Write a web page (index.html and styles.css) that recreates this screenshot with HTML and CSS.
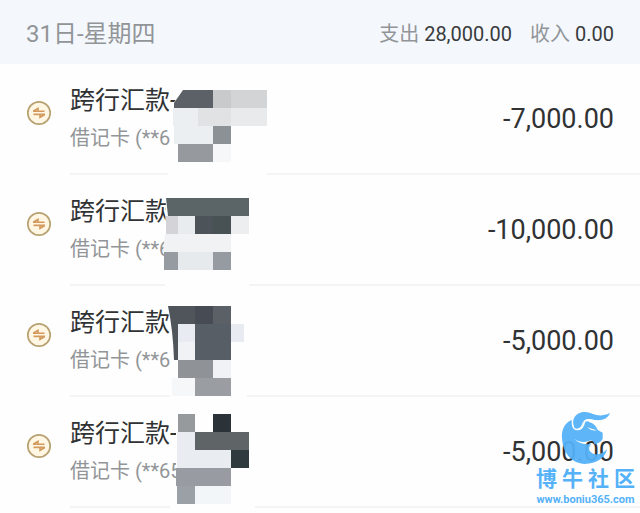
FILE: index.html
```html
<!DOCTYPE html>
<html lang="zh-CN">
<head>
<meta charset="utf-8">
<meta name="viewport" content="width=device-width, initial-scale=1">
<title>收支明细</title>
<link rel="stylesheet" href="styles.css">
</head>
<body>
<svg class="defs" aria-hidden="true">
  <symbol id="transfer" viewBox="0 0 26 26">
    <circle cx="13" cy="13" r="11.2" fill="#fff7e4" stroke="#b8a272" stroke-width="1.7"/>
    <path d="M7 11.3H18.5M7.5 11L12 8.4V11M19 14.4H7.5M18.5 14.7L14 17.3V14.7" fill="none" stroke="#d39a5e" stroke-width="1.6"/>
  </symbol>
</svg>
<header class="day">
  <h1 class="date">31日-星期四</h1>
  <p class="totals">
    <span>支出 <b>28,000.00</b></span>
    <span>收入 <b>0.00</b></span>
  </p>
</header>
<main>
  <ul class="list">
    <li class="row">
      <svg class="icon" aria-hidden="true"><use href="#transfer"/></svg>
      <div class="entry">
        <div class="info">
          <h2 class="title">跨行汇款-</h2>
          <p class="card">借记卡 (**6</p>
        </div>
        <span class="amount">-7,000.00</span>
      </div>
      <svg class="mosaic" viewBox="160 64 110 113" aria-hidden="true">
        <path fill="#fefefe" d="M183 88H267V177H168V150L173 126V104Z"/>
        <path fill="#5b6166" d="M183 90H213V108H174V103Z"/>
        <path fill="#c8cacc" d="M213 90H231V108H213Z"/>
        <path fill="#d2d4d5" d="M231 90H267V108H231Z"/>
        <path fill="#eceff1" d="M173 108H200V126H173ZM174 126H213V144H174Z"/>
        <path fill="#e0e2e4" d="M198 108H231V126H198Z"/>
        <path fill="#e8eaeb" d="M231 108H267V126H231Z"/>
        <path fill="#8c9195" d="M213 126H231V144H213Z"/>
        <path fill="#969a9e" d="M178 144H213V162H178Z"/>
        <path fill="#f5f7f9" d="M213 144H231V162H213Z"/>
      </svg>
    </li>
    <li class="row">
      <svg class="icon" aria-hidden="true"><use href="#transfer"/></svg>
      <div class="entry">
        <div class="info">
          <h2 class="title">跨行汇款</h2>
          <p class="card">借记卡 (**6</p>
        </div>
        <span class="amount">-10,000.00</span>
      </div>
      <svg class="mosaic" viewBox="160 175 110 113" aria-hidden="true">
        <path fill="#fefefe" d="M166 198H249V288H165V234Z"/>
        <path fill="#5b6467" d="M166 198H249V216H168Z"/>
        <path fill="#d4d4d8" d="M166 216H178V234H166Z"/>
        <path fill="#e8ecef" d="M178 216H195V234H178Z"/>
        <path fill="#4d5459" d="M195 216H213V234H195Z"/>
        <path fill="#485154" d="M213 216H231V234H213Z"/>
        <path fill="#edeeef" d="M231 216H249V234H231Z"/>
        <path fill="#f0f2f4" d="M165 234H231V252H163Z"/>
        <path fill="#969aa1" d="M164 252H178V270H164ZM213 252H231V270H213Z"/>
        <path fill="#e6eaed" d="M178 252H213V270H178Z"/>
      </svg>
    </li>
    <li class="row">
      <svg class="icon" aria-hidden="true"><use href="#transfer"/></svg>
      <div class="entry">
        <div class="info">
          <h2 class="title">跨行汇款</h2>
          <p class="card">借记卡 (**6</p>
        </div>
        <span class="amount">-5,000.00</span>
      </div>
      <svg class="mosaic" viewBox="160 286 110 113" aria-hidden="true">
        <path fill="#fefefe" d="M170 306H247V399H170V378H174V360Z"/>
        <path fill="#50555c" d="M168 306H195V324H178V360H174Q173 330 168 306Z"/>
        <path fill="#464b54" d="M195 306H213V324H195Z"/>
        <path fill="#5b6067" d="M213 306H231V324H213Z"/>
        <path fill="#e8ecf2" d="M178 324H195V342H178ZM231 324H244V342H231Z"/>
        <path fill="#f0f2f6" d="M178 342H195V360H178ZM213 360H231V378H213Z"/>
        <path fill="#585e66" d="M195 324H231V360H195Z"/>
        <path fill="#8f9398" d="M178 360H213V378H178Z"/>
        <path fill="#f6f7f9" d="M172 378H195V396H172Z"/>
        <path fill="#9a9ea3" d="M195 378H231V396H195Z"/>
      </svg>
    </li>
    <li class="row">
      <svg class="icon" aria-hidden="true"><use href="#transfer"/></svg>
      <div class="entry">
        <div class="info">
          <h2 class="title">跨行汇款-</h2>
          <p class="card">借记卡 (**65</p>
        </div>
        <span class="amount">-5,000.00</span>
      </div>
      <svg class="mosaic" viewBox="160 397 110 113" aria-hidden="true">
        <path fill="#fefefe" d="M178 414H255V510H170V504H176V432Z"/>
        <path fill="#969a9d" d="M178 414H195V432H178Z"/>
        <path fill="#2b3338" d="M213 414H231V432H213Z"/>
        <path fill="#e9edf1" d="M177 432H195V468H177ZM195 450H231V468H195Z"/>
        <path fill="#5f6467" d="M195 432H249V450H195Z"/>
        <path fill="#2f3a3e" d="M231 450H249V468H231Z"/>
        <path fill="#989ba1" d="M176 468H231V486H176Z"/>
        <path fill="#9b9fa6" d="M177 486H195V504H177Z"/>
        <path fill="#f3f6f8" d="M195 486H231V504H195Z"/>
      </svg>
      <div class="watermark">
        <svg class="bull" viewBox="240 60 150 165" aria-hidden="true">
          <path d="M272 90C250 98 241 122 243 145C246 193 275 221 311 222C347 221 372 205 378 178C366 191 346 198 334 190C322 183 322 172 330 163C312 164 293 160 280 147C293 156 310 158 322 153C333 148 341 156 340 164C351 160 363 156 365 145V128L350 120C346 109 337 100 326 97C319 92 313 93 311 101C307 118 291 126 279 118Q271 110 272 90Z"/>
          <path d="M280 115C268 88 286 65 313 66C338 68 350 86 387 69C380 88 358 94 337 89C321 85 309 86 307 99C304 113 288 121 280 115Z"/>
          <path class="cut" d="M275 92C274 109 280 120 291 117C306 112 302 99 311 92C321 86 334 92 350 92"/>
          <path class="eye" d="M318 112L347 121Q331 124 318 112Z"/>
        </svg>
        <span class="brand">博牛社区</span>
        <span class="site">www.boniu365.com</span>
      </div>
    </li>
  </ul>
</main>
</body>
</html>
```
FILE: styles.css
```css
* {
  box-sizing: border-box;
  margin: 0;
  padding: 0;
}

body {
  background: #fefefe;
  color: #303234;
  font-family: Roboto, "Noto Sans CJK SC", sans-serif;
}

.defs {
  display: none;
}

.day {
  display: flex;
  align-items: center;
  justify-content: space-between;
  height: 64px;
  padding: 0 26px;
  background: #f4f8fd;
  color: #929598;
}

.date {
  padding-bottom: 2px;
  font-size: 24px;
  font-weight: 400;
}

.totals {
  display: flex;
  gap: 18px;
  font-size: 20px;
}

.totals b {
  color: #393b3d;
  font-weight: 400;
}

.list {
  list-style: none;
}

.row {
  position: relative;
  display: flex;
  align-items: center;
  height: 111px;
  padding-left: 26px;
}

.icon {
  flex: none;
  width: 26px;
  height: 26px;
  margin-right: 18px;
  margin-bottom: 14px;
}

.entry {
  flex: 1;
  display: flex;
  align-items: center;
  justify-content: space-between;
  height: 100%;
  padding-right: 26px;
  border-bottom: 2px solid #f4f4f5;
}

.title {
  font-size: 25px;
  font-weight: 400;
  line-height: 38px;
}

.card {
  color: #929598;
  font-size: 20px;
  line-height: 36px;
}

.amount {
  font-size: 27px;
  line-height: 32px;
}

.mosaic {
  position: absolute;
  left: 160px;
  top: 0;
  z-index: 1;
  width: 110px;
  height: 113px;
}

.watermark {
  position: absolute;
  right: 5px;
  top: 13px;
  z-index: 2;
  width: 99px;
  display: flex;
  flex-direction: column;
  color: #55b2f8;
}

.bull {
  width: 50px;
  height: 55px;
  margin-left: 25px;
  fill: #55b2f8;
  opacity: 0.94;
}

.bull .cut {
  fill: none;
  stroke: #fff;
  stroke-width: 3;
}

.bull .eye {
  fill: #fff;
}

.brand {
  font-size: 21px;
  font-weight: 700;
  line-height: 28px;
  text-align-last: justify;
}

.site {
  font-family: Roboto, sans-serif;
  font-size: 11px;
  font-weight: 700;
  line-height: 14px;
  text-align: center;
}
```
